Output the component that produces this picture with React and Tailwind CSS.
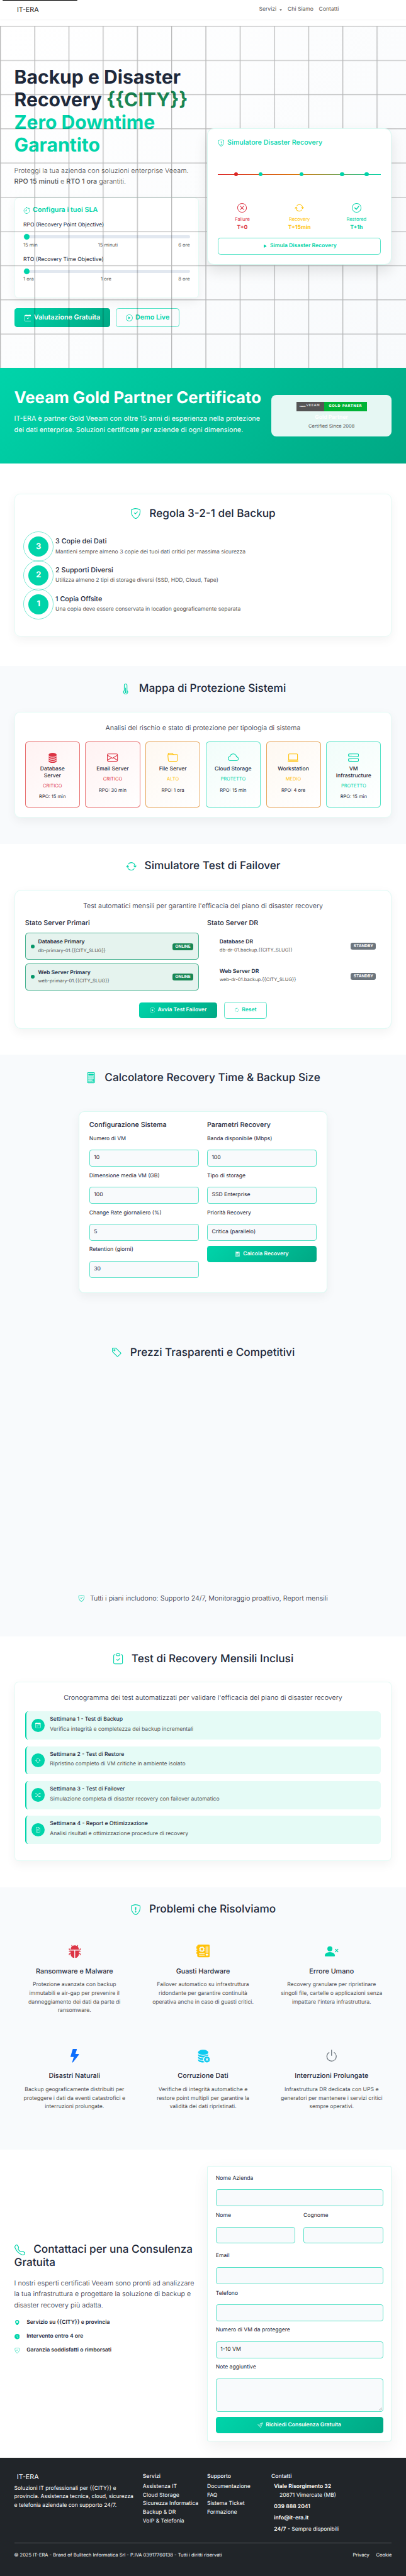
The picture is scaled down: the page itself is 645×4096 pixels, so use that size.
import React from "react";
import {
  BsArrowClockwise,
  BsArrowRepeat,
  BsBugFill,
  BsCalculator,
  BsCalendarCheck,
  BsCalendarWeek,
  BsCheckCircle,
  BsClipboardCheck,
  BsClockFill,
  BsCloud,
  BsDatabaseFill,
  BsDatabaseFillX,
  BsEnvelope,
  BsFileEarmarkText,
  BsFolder,
  BsGeoAltFill,
  BsHddStack,
  BsLaptop,
  BsLightningFill,
  BsMotherboardFill,
  BsPersonXFill,
  BsPlayCircle,
  BsPlayFill,
  BsPower,
  BsSend,
  BsShieldCheck,
  BsShieldExclamation,
  BsShuffle,
  BsStopwatch,
  BsTag,
  BsTelephone,
  BsThermometerHalf,
  BsXCircle,
} from "react-icons/bs";

const cardShadow = "shadow-[0_10px_30px_rgba(0,0,0,0.05)]";
const gradient = "bg-[linear-gradient(135deg,#00d4aa_0%,#00a884_100%)]";

function SectionHeading({ icon: Icon, children }) {
  return (
    <h2 className="flex items-center justify-center text-[32px] leading-[38px] font-medium text-[#1e293b]">
      <Icon className="mr-[24px] size-8 text-[#00d4aa]" />
      {children}
    </h2>
  );
}

function Header() {
  return (
    <header className="relative z-10 h-[58px] bg-white shadow-[0_2px_4px_rgba(0,0,0,0.075)]">
      <div className="absolute top-0 left-[7px] h-[2px] w-[222px] rounded-b-[2px] bg-black" />
      <div className="flex h-[58px] items-center pl-[50px]">
        <div className="w-[715.5px] text-[20px] text-[#1a1a1a]">IT-ERA</div>
        <nav className="flex items-center text-[16px] text-[#555]">
          <span className="flex items-center">
            Servizi
            <span className="ml-[9px] border-x-[4px] border-t-[5px] border-x-transparent border-t-[#444]" />
          </span>
          <span className="ml-[17px]">Chi Siamo</span>
          <span className="ml-[16px]">Contatti</span>
        </nav>
      </div>
    </header>
  );
}

function Slider({ label, min, value, max }) {
  return (
    <div className="h-[102px]">
      <div className="text-[16px] leading-[24px] text-[#1e293b]">{label}</div>
      <div className="mt-[12px] flex h-[20px] items-center">
        <div className="z-[1] size-[20px] shrink-0 rounded-full border-2 border-white bg-[#00d4aa]" />
        <div className="-ml-[2px] h-[8px] flex-1 rounded-r-[4px] bg-[#e2e8f0]" />
      </div>
      <div className="mt-[3px] flex justify-between text-[14px] leading-[21px] text-[#555]">
        <span>{min}</span>
        <span>{value}</span>
        <span>{max}</span>
      </div>
    </div>
  );
}

const stages = [
  { icon: BsXCircle, name: "Failure", time: "T+0", color: "text-[#dc3545]" },
  { icon: BsArrowRepeat, name: "Recovery", time: "T+15min", color: "text-[#ffc107]" },
  { icon: BsCheckCircle, name: "Restored", time: "T+1h", color: "text-[#00d4aa]" },
];

const timelineDots = [
  "left-[10%] bg-[#dc2626]",
  "left-[25%] bg-[#00d4aa]",
  "left-[50%] bg-[#00d4aa]",
  "left-[75%] bg-[#00d4aa]",
  "left-[90%] bg-[#00d4aa]",
];

function Hero() {
  return (
    <section className="relative mt-[18px] flex h-[1012px] items-start bg-[linear-gradient(135deg,#ffffff_0%,#f8fafc_100%)] px-[42px]">
      <div className="w-[546px] pt-[119px]">
        <h1 className="text-[56px] leading-[67.2px] font-bold whitespace-nowrap text-[#1e293b]">
          Backup e Disaster
          <br />
          Recovery <span className="text-[#198754]">{"{{CITY}}"}</span>
          <br />
          <span className="text-[#00d4aa]">
            Zero Downtime
            <br />
            Garantito
          </span>
        </h1>
        <p className="mt-[25px] text-[20px] leading-[32px] font-light whitespace-nowrap text-[#555]">
          Proteggi la tua azienda con soluzioni enterprise Veeam.
          <br />
          <span className="font-medium">RPO 15 minuti</span> e <span className="font-medium">RTO 1 ora</span> garantiti.
        </p>
        <div className={`mt-[31px] h-[298px] rounded-[12px] border border-[#00d4aa]/10 bg-white px-[25px] pt-[24px] ${cardShadow}`}>
          <div className="flex h-[24px] items-center text-[20px] font-semibold text-[#00d4aa]">
            <BsStopwatch className="mr-[8px] size-[20px]" />
            Configura i tuoi SLA
          </div>
          <div className="mt-[21px]">
            <Slider label="RPO (Recovery Point Objective)" min="15 min" value="15 minuti" max="6 ore" />
            <Slider label="RTO (Recovery Time Objective)" min="1 ora" value="1 ore" max="8 ore" />
          </div>
        </div>
        <div className="mt-[30px] flex gap-[16px]">
          <div className={`flex h-[56px] w-[284px] items-center rounded-[8px] pl-[30px] text-[20px] font-semibold text-white ${gradient}`}>
            <BsCalendarCheck className="mr-[8px] size-[20px]" />
            Valutazione Gratuita
          </div>
          <div className="flex h-[56px] w-[188px] items-center rounded-[8px] border border-[#00d4aa]/65 pl-[28px] text-[20px] font-semibold text-[#00d4aa]">
            <BsPlayCircle className="mr-[8px] size-[20px]" />
            Demo Live
          </div>
        </div>
      </div>

      <svg className="absolute inset-0" width="1200" height="1012">
        <defs>
          <pattern id="hero-grid" width="101.2" height="101.2" patternUnits="userSpaceOnUse">
            <path d="M101.2 0H0V101.2" fill="none" stroke="#000" strokeOpacity="0.27" strokeWidth="5" />
          </pattern>
        </defs>
        <rect width="1200" height="1012" fill="url(#hero-grid)" />
      </svg>

      <div className="relative z-[2] mt-[304px] ml-[24px] h-[403px] w-[546px] rounded-[20px] border border-[#00d4aa]/15 bg-white px-[30px] pt-[29px] shadow-[0_20px_40px_rgba(0,0,0,0.1)]">
        <div className="flex h-[24px] items-center text-[20px] font-medium text-[#00d4aa]">
          <BsShieldExclamation className="mr-[8px] size-[20px]" />
          Simulatore Disaster Recovery
        </div>
        <div className="relative mt-[80px] h-[2px] bg-[linear-gradient(90deg,#dc2626_0%,#d97706_50%,#00d4aa_100%)]">
          {timelineDots.map((c) => (
            <span key={c} className={`absolute -top-[5px] size-[12px] rounded-full ${c}`} />
          ))}
        </div>
        <div className="-mx-[12px] mt-[85px] grid grid-cols-3">
          {stages.map(({ icon: Icon, name, time, color }) => (
            <div key={name} className={`flex flex-col items-center ${color}`}>
              <Icon className="size-[28px]" />
              <div className="mt-[9px] text-[14px] leading-[22px]">{name}</div>
              <div className="mt-[1px] text-[16px] leading-[26px] font-bold">{time}</div>
            </div>
          ))}
        </div>
        <div className="mt-[15px] flex h-[50px] items-center justify-center rounded-[8px] border border-[#00d4aa]/65 text-[16px] font-semibold text-[#00d4aa]">
          <BsPlayFill className="mr-[7px] size-4" />
          Simula Disaster Recovery
        </div>
      </div>
    </section>
  );
}

function Partner() {
  return (
    <section className={`flex h-[284px] items-start px-[42px] pt-[80px] text-white ${gradient}`}>
      <div className="w-[760px] whitespace-nowrap">
        <h2 className="-mt-[20px] text-[48px] leading-[58px] font-bold">Veeam Gold Partner Certificato</h2>
        <p className="mt-[17px] text-[20px] leading-[32px] font-normal">
          IT-ERA è partner Gold Veeam con oltre 15 anni di esperienza nella protezione
          <br />
          dei dati enterprise. Soluzioni certificate per aziende di ogni dimensione.
        </p>
      </div>
      <div className="flex h-[124px] w-[356px] flex-col items-center rounded-[15px] bg-white/90 pt-[20px]">
        <div className="flex h-[28px] w-[208px] font-['DejaVu_Sans',sans-serif] text-[10px] leading-[29px]">
          <div className="flex w-[82px] items-center bg-[#555] pl-[9px]">
            <span className="w-[20px] text-[5px] leading-[28px] font-bold">veeam</span>
            <span className="tracking-[1.2px]">VEEAM</span>
          </div>
          <div className="w-[126px] bg-[#00b336] text-center font-bold tracking-[1.1px]">GOLD PARTNER</div>
        </div>
        <div className="mt-[8px] text-[16px] leading-[26px] font-bold">Gold Partner</div>
        <div className="text-[14px] leading-[22px] text-[#555]">Certified Since 2008</div>
      </div>
    </section>
  );
}

const rules = [
  ["3", "3 Copie dei Dati", "Mantieni sempre almeno 3 copie dei tuoi dati critici per massima sicurezza"],
  ["2", "2 Supporti Diversi", "Utilizza almeno 2 tipi di storage diversi (SSD, HDD, Cloud, Tape)"],
  ["1", "1 Copia Offsite", "Una copia deve essere conservata in location geograficamente separata"],
];

function Rule321() {
  return (
    <section className="h-[599px] bg-white px-[42px] pt-[88px]">
      <div className={`h-[422px] rounded-[16px] border border-[#00d4aa]/10 px-[25px] pt-[39px] ${cardShadow}`}>
        <SectionHeading icon={BsShieldCheck}>Regola 3-2-1 del Backup</SectionHeading>
        <div className="mt-[36px]">
          {rules.map(([n, title, text]) => (
            <div key={n} className="flex h-[85px] items-center">
              <div className="-my-[2px] flex size-[90px] shrink-0 items-center justify-center rounded-full border-2 border-[#00d4aa]/50">
                <div className="flex size-[60px] items-center justify-center rounded-full bg-[#00d4aa] text-[24px] font-bold text-white">{n}</div>
              </div>
              <div className="-mt-[2px] ml-[5px]">
                <div className="text-[20px] leading-[32px] font-medium text-[#1e293b]">{title}</div>
                <div className="mt-[4px] text-[16px] leading-[25px] text-[#555]">{text}</div>
              </div>
            </div>
          ))}
        </div>
      </div>
    </section>
  );
}

const red = { box: "border-[#dc2626]/65 bg-[linear-gradient(135deg,#fff2f2,#ffffff)]", text: "text-[#dc3545]" };
const amber = { box: "border-[#d97706]/65 bg-[linear-gradient(135deg,#fef8f1,#ffffff)]", text: "text-[#ffc107]" };
const green = { box: "border-[#00d4aa]/65 bg-[linear-gradient(135deg,#f1fdfa,#ffffff)]", text: "text-[#00d4aa]" };

const systems = [
  { icon: BsDatabaseFill, name: "Database Server", status: "CRITICO", rpo: "15 min", tone: red },
  { icon: BsEnvelope, name: "Email Server", status: "CRITICO", rpo: "30 min", tone: red },
  { icon: BsFolder, name: "File Server", status: "ALTO", rpo: "1 ora", tone: amber },
  { icon: BsCloud, name: "Cloud Storage", status: "PROTETTO", rpo: "15 min", tone: green },
  { icon: BsLaptop, name: "Workstation", status: "MEDIO", rpo: "4 ore", tone: amber },
  { icon: BsHddStack, name: "VM Infrastructure", status: "PROTETTO", rpo: "15 min", tone: green },
];

function ProtectionMap() {
  return (
    <section className="h-[526px] bg-[#f8fafc] px-[42px] pt-[48px]">
      <SectionHeading icon={BsThermometerHalf}>Mappa di Protezione Sistemi</SectionHeading>
      <div className={`mt-[50px] h-[312px] rounded-[16px] border border-[#00d4aa]/10 bg-white px-[30px] pt-[29px] ${cardShadow}`}>
        <p className="text-center text-[20px] leading-[32px] font-light text-[#1e293b]">
          Analisi del rischio e stato di protezione per tipologia di sistema
        </p>
        <div className="mt-[24px] grid h-[195px] grid-cols-6 gap-[16px]">
          {systems.map(({ icon: Icon, name, status, rpo, tone }) => (
            <div key={name} className={`flex flex-col items-center rounded-[10px] border px-[20px] pt-[29px] text-center ${tone.box}`}>
              <Icon className={`size-8 ${tone.text}`} />
              <div className="mt-[10px] text-[16px] leading-[19.2px] font-medium text-[#1e293b]">{name}</div>
              <div className={`mt-[9px] text-[14px] leading-[22px] ${tone.text}`}>{status}</div>
              <div className="mt-[10px] text-[14px] leading-[22px] text-[#1e293b]">RPO: {rpo}</div>
            </div>
          ))}
        </div>
      </div>
    </section>
  );
}

function ServerRow({ name, host, online }) {
  return (
    <div
      className={
        online
          ? "mb-[10px] flex h-[80px] items-center rounded-[10px] border border-[#059669]/70 bg-[#e5f3ee] px-[15px]"
          : "mb-[10px] flex h-[78px] items-center px-[15px]"
      }
    >
      <span className={online ? "size-[12px] rounded-full bg-[#059669]" : "size-[12px]"} />
      <div className="ml-[10px] flex-1">
        <div className="text-[16px] leading-[25px] font-semibold text-[#1e293b]">{name}</div>
        <div className="text-[14px] leading-[22px] text-[#555]">{host}</div>
      </div>
      <span
        className={
          online
            ? "mt-[2px] rounded-[6px] bg-[#198754] px-[8px] text-[12px] leading-[20px] font-bold text-white"
            : "mt-[2px] rounded-[6px] bg-[#6c757d] px-[8px] text-[12px] leading-[20px] font-bold text-white"
        }
      >
        {online ? "ONLINE" : "STANDBY"}
      </span>
    </div>
  );
}

function Failover() {
  return (
    <section className="h-[624px] bg-white px-[42px] pt-[47px]">
      <SectionHeading icon={BsArrowRepeat}>Simulatore Test di Failover</SectionHeading>
      <div className={`mt-[50px] h-[412px] rounded-[20px] border border-[#00d4aa]/12 bg-white px-[30px] pt-[30px] ${cardShadow}`}>
        <p className="text-center text-[20px] leading-[32px] font-light text-[#1e293b]">
          Test automatici mensili per garantire l'efficacia del piano di disaster recovery
        </p>
        <div className="mt-[24px] grid grid-cols-2 gap-[24px]">
          <div>
            <h5 className="mb-[16px] text-[20px] leading-[24px] font-medium text-[#1e293b]">Stato Server Primari</h5>
            <ServerRow name="Database Primary" host="db-primary-01.{{CITY_SLUG}}" online />
            <ServerRow name="Web Server Primary" host="web-primary-01.{{CITY_SLUG}}" online />
          </div>
          <div>
            <h5 className="mb-[16px] text-[20px] leading-[24px] font-medium text-[#1e293b]">Stato Server DR</h5>
            <ServerRow name="Database DR" host="db-dr-01.backup.{{CITY_SLUG}}" />
            <ServerRow name="Web Server DR" host="web-dr-01.backup.{{CITY_SLUG}}" />
          </div>
        </div>
        <div className="mt-[24px] flex items-center justify-center gap-[21px] text-[16px] font-semibold">
          <div className={`flex h-[48px] w-[229px] items-center justify-center rounded-[8px] text-white ${gradient}`}>
            <BsPlayCircle className="mr-[8px] size-4" />
            Avvia Test Failover
          </div>
          <div className="flex h-[50px] w-[126px] items-center justify-center rounded-[8px] border border-[#00d4aa]/65 text-[#00d4aa]">
            <BsArrowClockwise className="mr-[8px] size-[15px]" />
            Reset
          </div>
        </div>
      </div>
    </section>
  );
}

function Field({ label, value }) {
  return (
    <div className="h-[109.6px]">
      <div className="text-[16px] leading-[24px] text-[#1e293b]">{label}</div>
      <div className="mt-[20px] flex h-[50px] items-center rounded-[8px] border border-[#00d4aa]/65 bg-[#f8fafc] pl-[12px] text-[16px] text-[#1e293b]">
        {value}
      </div>
    </div>
  );
}

function Calculator() {
  return (
    <section className="h-[814px] bg-[#f8fafc] pt-[49px]">
      <SectionHeading icon={BsCalculator}>Calcolatore Recovery Time &amp; Backup Size</SectionHeading>
      <div className={`mx-auto mt-[79px] grid h-[539px] w-[736px] grid-cols-2 gap-x-[24px] rounded-[16px] border border-[#00d4aa]/15 bg-white px-[30px] pt-[29px] ${cardShadow}`}>
        <div>
          <h5 className="mb-[16px] text-[20px] leading-[24px] font-medium text-[#1e293b]">Configurazione Sistema</h5>
          <Field label="Numero di VM" value="10" />
          <Field label="Dimensione media VM (GB)" value="100" />
          <Field label="Change Rate giornaliero (%)" value="5" />
          <Field label="Retention (giorni)" value="30" />
        </div>
        <div>
          <h5 className="mb-[16px] text-[20px] leading-[24px] font-medium text-[#1e293b]">Parametri Recovery</h5>
          <Field label="Banda disponibile (Mbps)" value="100" />
          <Field label="Tipo di storage" value="SSD Enterprise" />
          <Field label="Priorità Recovery" value="Critica (parallelo)" />
          <div className={`flex h-[48px] items-center justify-center rounded-[8px] text-[16px] font-semibold text-white ${gradient}`}>
            <BsCalculator className="mr-[8px] size-4" />
            Calcola Recovery
          </div>
        </div>
      </div>
    </section>
  );
}

function Pricing() {
  return (
    <section className="flex h-[906px] flex-col bg-[#f8fafc] pt-[48px]">
      <SectionHeading icon={BsTag}>Prezzi Trasparenti e Competitivi</SectionHeading>
      <p className="mt-[692px] flex items-center justify-center text-[20px] leading-[32px] font-light text-[#1e293b]">
        <BsShieldCheck className="mr-[15px] size-[20px] text-[#00d4aa]" />
        Tutti i piani includono: Supporto 24/7, Monitoraggio proattivo, Report mensili
      </p>
    </section>
  );
}

const weeks = [
  [BsCalendarWeek, "Settimana 1 - Test di Backup", "Verifica integrità e completezza dei backup incrementali"],
  [BsArrowRepeat, "Settimana 2 - Test di Restore", "Ripristino completo di VM critiche in ambiente isolato"],
  [BsShuffle, "Settimana 3 - Test di Failover", "Simulazione completa di disaster recovery con failover automatico"],
  [BsFileEarmarkText, "Settimana 4 - Report e Ottimizzazione", "Analisi risultati e ottimizzazione procedure di recovery"],
];

function MonthlyTests() {
  return (
    <section className="h-[742px] bg-white px-[42px] pt-[48px]">
      <SectionHeading icon={BsClipboardCheck}>Test di Recovery Mensili Inclusi</SectionHeading>
      <div className={`mt-[48px] h-[530px] rounded-[12px] border border-[#00d4aa]/10 bg-white px-[30px] pt-[30px] ${cardShadow}`}>
        <p className="mb-[24px] text-center text-[20px] leading-[32px] font-light text-[#1e293b]">
          Cronogramma dei test automatizzati per validare l'efficacia del piano di disaster recovery
        </p>
        {weeks.map(([Icon, title, text]) => (
          <div key={title} className="mb-[20px] flex h-[83px] items-center rounded-[10px] border-l-[4px] border-[#00d4aa] bg-[#e5fbf6] pl-[15px]">
            <div className="flex size-[40px] items-center justify-center rounded-full bg-[#00d4aa]">
              <Icon className="size-4 text-white" />
            </div>
            <div className="ml-[15px]">
              <div className="text-[16px] leading-[19px] font-medium text-[#1e293b]">{title}</div>
              <div className="mt-[8px] text-[16px] leading-[26px] text-[#555]">{text}</div>
            </div>
          </div>
        ))}
      </div>
    </section>
  );
}

const problems = [
  [BsBugFill, "text-[#dc3545]", "Ransomware e Malware", ["Protezione avanzata con backup", "immutabili e air-gap per prevenire il", "danneggiamento dei dati da parte di", "ransomware."]],
  [BsMotherboardFill, "text-[#ffc107]", "Guasti Hardware", ["Failover automatico su infrastruttura", "ridondante per garantire continuità", "operativa anche in caso di guasti critici."]],
  [BsPersonXFill, "text-[#00d4aa]", "Errore Umano", ["Recovery granulare per ripristinare", "singoli file, cartelle o applicazioni senza", "impattare l'intera infrastruttura."]],
  [BsLightningFill, "text-[#0d6efd]", "Disastri Naturali", ["Backup geograficamente distribuiti per", "proteggere i dati da eventi catastrofici e", "interruzioni prolungate."]],
  [BsDatabaseFillX, "text-[#0dcaf0]", "Corruzione Dati", ["Verifiche di integrità automatiche e", "restore point multipli per garantire la", "validità dei dati ripristinati."]],
  [BsPower, "text-[#6c757d]", "Interruzioni Prolungate", ["Infrastruttura DR dedicata con UPS e", "generatori per mantenere i servizi critici", "sempre operativi."]],
];

function Problems() {
  return (
    <section className="h-[777px] bg-[#f8fafc] px-[30px] pt-[47px]">
      <SectionHeading icon={BsShieldExclamation}>Problemi che Risolviamo</SectionHeading>
      <div className="mt-[84px] grid grid-cols-3">
        {problems.map(([Icon, color, title, lines]) => (
          <div key={title} className="flex h-[310px] flex-col items-center text-center">
            <Icon className={`size-[40px] ${color}`} />
            <h4 className="mt-[29px] text-[20px] leading-[24px] font-medium text-[#1e293b]">{title}</h4>
            <p className="mt-[16px] text-[16px] leading-[25.6px] text-[#555]">
              {lines.map((l) => (
                <span key={l} className="block">{l}</span>
              ))}
            </p>
          </div>
        ))}
      </div>
    </section>
  );
}

function Input({ label, value }) {
  return (
    <div>
      <div className="text-[16px] leading-[24px] text-[#1e293b]">{label}</div>
      <div className="mt-[19.5px] flex h-[50px] items-center rounded-[8px] border border-[#00d4aa]/65 bg-[#f8fafc] pl-[12px] text-[16px] text-[#212529]">
        {value}
      </div>
    </div>
  );
}

const perks = [
  [BsGeoAltFill, "Servizio su {{CITY}} e provincia"],
  [BsClockFill, "Intervento entro 4 ore"],
  [BsShieldCheck, "Garanzia soddisfatti o rimborsati"],
];

function Contact() {
  return (
    <section className="flex h-[910px] items-start gap-[24px] bg-white px-[42px]">
      <div className="w-[546px] pt-[277px] whitespace-nowrap">
        <h2 className="text-[32px] leading-[39px] font-medium text-[#1e293b]">
          <span className="flex items-center">
            <BsTelephone className="mr-[25px] size-8 text-[#00d4aa]" />
            Contattaci per una Consulenza
          </span>
          Gratuita
        </h2>
        <p className="mt-[24px] text-[20px] leading-[32px] font-light text-[#1e293b]">
          I nostri esperti certificati Veeam sono pronti ad analizzare
          <br />
          la tua infrastruttura e progettare la soluzione di backup e
          <br />
          disaster recovery più adatta.
        </p>
        <div className="mt-[23px]">
          {perks.map(([Icon, text]) => (
            <div key={text} className="mb-[15.5px] flex h-[26px] items-center text-[16px] font-semibold text-[#1e293b]">
              <Icon className="mr-[20.5px] size-4 text-[#00d4aa]" />
              {text}
            </div>
          ))}
        </div>
      </div>
      <div className="mt-[48px] h-[814px] w-[546px] rounded-[6px] border border-[#00d4aa]/15 bg-white px-[24px] pt-[24px] shadow-[0_16px_48px_rgba(0,0,0,0.06)]">
        <Input label="Nome Azienda" />
        <div className="mt-[16.5px] grid grid-cols-2 gap-[24px]">
          <Input label="Nome" />
          <Input label="Cognome" />
        </div>
        <div className="mt-[26px]">
          <Input label="Email" />
        </div>
        <div className="mt-[16.5px]">
          <Input label="Telefono" />
        </div>
        <div className="mt-[16px]">
          <Input label="Numero di VM da proteggere" value="1-10 VM" />
        </div>
        <div className="mt-[16px]">
          <div className="text-[16px] leading-[24px] text-[#1e293b]">Note aggiuntive</div>
          <div className="mt-[20px] flex h-[98px] items-end justify-end rounded-[8px] border border-[#00d4aa]/65 bg-[#f8fafc] p-[1px]">
            <svg width="9" height="9" viewBox="0 0 9 9" className="text-[#555]">
              <path d="M1 8L8 1M5 8L8 5" stroke="currentColor" strokeWidth="1" />
            </svg>
          </div>
        </div>
        <div className={`mt-[16px] flex h-[48px] items-center justify-center rounded-[8px] text-[16px] font-semibold text-white ${gradient}`}>
          <BsSend className="mr-[8px] size-4" />
          Richiedi Consulenza Gratuita
        </div>
      </div>
    </section>
  );
}

function FooterLinks({ title, items }) {
  return (
    <div className="w-[190px]">
      <div className="mb-[8px] text-[16px] leading-[19px] font-medium">{title}</div>
      {items.map((i) => (
        <div key={i} className="text-[16px] leading-[25.6px] whitespace-nowrap">{i}</div>
      ))}
    </div>
  );
}

function Footer() {
  return (
    <footer className="h-[352px] bg-[#212529] px-[42px] pt-[48px] text-[16px] text-white">
      <div className="flex h-[204px] items-start">
        <div className="w-[380px] whitespace-nowrap">
          <div className="pl-[8px] text-[20px] leading-[24px]">IT-ERA</div>
          <p className="mt-[8px] leading-[25.6px]">
            Soluzioni IT professionali per {"{{CITY}}"} e
            <br />
            provincia. Assistenza tecnica, cloud, sicurezza
            <br />
            e telefonia aziendale con supporto 24/7.
          </p>
        </div>
        <FooterLinks title="Servizi" items={["Assistenza IT", "Cloud Storage", "Sicurezza Informatica", "Backup & DR", "VoIP & Telefonia"]} />
        <FooterLinks title="Supporto" items={["Documentazione", "FAQ", "Sistema Ticket", "Formazione"]} />
        <div className="leading-[25.6px]">
          <div className="mb-[8px] leading-[19px] font-medium">Contatti</div>
          <div className="pl-[8px]">
            <div className="font-semibold">Viale Risorgimento 32</div>
            <div className="pl-[16px]">20871 Vimercate (MB)</div>
            <div className="mt-[8px] font-semibold">039 888 2041</div>
            <div className="mt-[8px] font-semibold">info@it-era.it</div>
            <div className="mt-[8px]">
              <span className="font-semibold">24/7</span> - Sempre disponibili
            </div>
          </div>
        </div>
      </div>
      <div className="flex items-center border-t border-[#5a5d60] pt-[25px] text-[14px] leading-[22px]">
        <span>© 2025 IT-ERA - Brand of Bulltech Informatica Srl - P.IVA 03917760138 - Tutti i diritti riservati</span>
        <span className="ml-auto">Privacy</span>
        <span className="ml-[20px]">Cookie</span>
      </div>
    </footer>
  );
}

export default function App() {
  return (
    <div className="w-[1200px] overflow-hidden bg-white font-['Inter',sans-serif] [text-rendering:geometricPrecision] [zoom:0.5375]">
      <Header />
      <Hero />
      <Partner />
      <Rule321 />
      <ProtectionMap />
      <Failover />
      <Calculator />
      <Pricing />
      <MonthlyTests />
      <Problems />
      <Contact />
      <Footer />
    </div>
  );
}
